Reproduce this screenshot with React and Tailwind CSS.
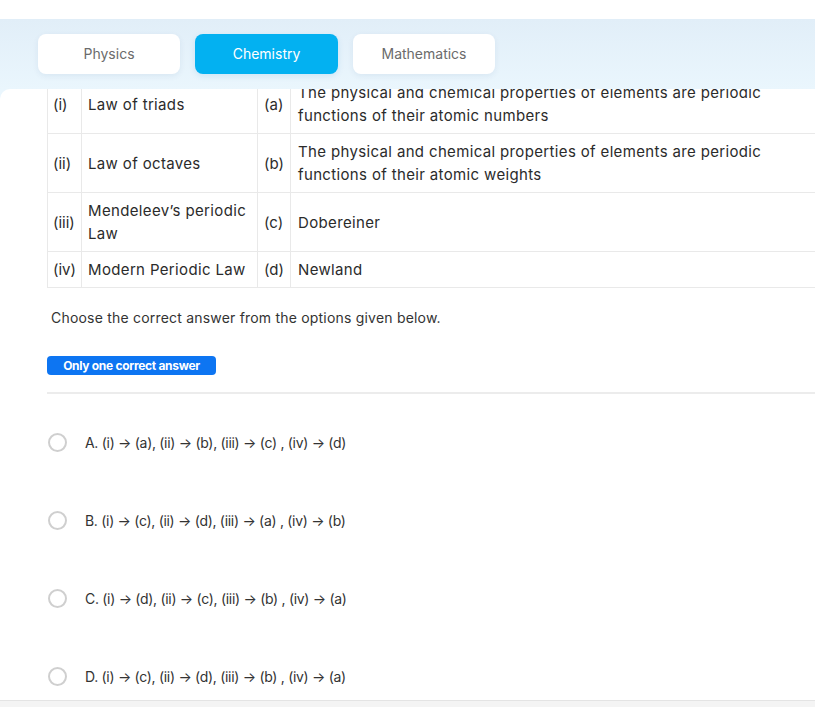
const tabs = [
  { label: 'Physics' },
  { label: 'Chemistry', active: true },
  { label: 'Mathematics' },
]

const rows = [
  { n: '(i)', law: 'Law of triads', k: '(a)', desc: 'The physical and chemical properties of elements are periodic functions of their atomic numbers' },
  { n: '(ii)', law: 'Law of octaves', k: '(b)', desc: 'The physical and chemical properties of elements are periodic functions of their atomic weights' },
  { n: '(iii)', law: 'Mendeleev’s periodic Law', k: '(c)', desc: 'Dobereiner' },
  { n: '(iv)', law: 'Modern Periodic Law', k: '(d)', desc: 'Newland' },
]

const options = [
  'A. (i) → (a), (ii) → (b), (iii) → (c) , (iv) → (d)',
  'B. (i) → (c), (ii) → (d), (iii) → (a) , (iv) → (b)',
  'C. (i) → (d), (ii) → (c), (iii) → (b) , (iv) → (a)',
  'D. (i) → (c), (ii) → (d), (iii) → (b) , (iv) → (a)',
]

export default function App() {
  return (
    <div className="w-[815px] h-[707px] overflow-hidden bg-white flex flex-col font-['Inter',sans-serif] text-[#2b2b2b]">
      <div className="h-[19px] shrink-0 bg-white" />

      {/* subject tabs */}
      <div className="flex-1 min-h-0 flex flex-col bg-gradient-to-b from-[#e1eef8] to-[#eaf6fd] to-[70px]">
        <div className="h-[70px] shrink-0 flex items-start pt-[15px] pl-[38px] gap-[15px]">
          {tabs.map(({ label, active }) => (
            <div
              key={label}
              className={
                active
                  ? 'w-[143px] h-[40px] pb-[1px] rounded-[8px] bg-[#03b1f1] text-white text-[14px] flex items-center justify-center shadow-[0_2px_6px_rgba(0,120,200,0.12)]'
                  : 'w-[142px] h-[40px] pb-[1px] rounded-[8px] bg-white text-[#6b6b6b] text-[14px] flex items-center justify-center shadow-[0_2px_6px_rgba(0,60,120,0.07)]'
              }
            >
              {label}
            </div>
          ))}
        </div>

        {/* question card */}
        <div className="flex-1 min-h-0 bg-white rounded-tl-[10px] overflow-hidden flex flex-col">
          <div className="pl-[47px] -mt-[15px]">
            <table className="w-[800px] border-collapse text-[15px] leading-[23px] tracking-[0.35px]">
              <tbody>
                {rows.map(({ n, law, k, desc }) => (
                  <tr key={n}>
                    <td className="w-[34px] border border-[#e9e9e9] px-[5px] py-[6px] align-middle tracking-normal">{n}</td>
                    <td className="w-[176px] border border-[#e9e9e9] px-[6px] py-[6px] align-middle">{law}</td>
                    <td className="w-[33px] border border-[#e9e9e9] px-[6px] py-[6px] align-middle tracking-normal">{k}</td>
                    <td className="border border-[#e9e9e9] border-r-0 px-[7px] py-[6px] align-middle">
                      <span className="block w-[480px]">{desc}</span>
                    </td>
                  </tr>
                ))}
              </tbody>
            </table>

            <p className="mt-[18px] pl-[4px] text-[14px] leading-[23px] tracking-[0.2px] text-[#333]">
              Choose the correct answer from the options given below.
            </p>

            <div className="mt-[27px] w-[169px] h-[19px] rounded-[4px] bg-[#0d75f2] text-white text-[12px] font-bold tracking-[-0.3px] flex items-center justify-center">
              Only one correct answer
            </div>

            <div className="mt-[17px] h-[2px] bg-[#ececec]" />

            <div className="pt-[9px] flex flex-col">
              {options.map((o) => (
                <div key={o} className="h-[78px] flex items-center">
                  <span className="w-[19px] h-[19px] rounded-full border-2 border-[#cfcfcf] bg-white shrink-0 ml-[1px]" />
                  <span className="ml-[18px] text-[14px] tracking-[-0.3px] text-[#333]">{o}</span>
                </div>
              ))}
            </div>
          </div>
        </div>
      </div>

      <div className="h-[7px] shrink-0 bg-[#f4f4f4] border-t border-[#e4e4e4]" />
    </div>
  )
}
